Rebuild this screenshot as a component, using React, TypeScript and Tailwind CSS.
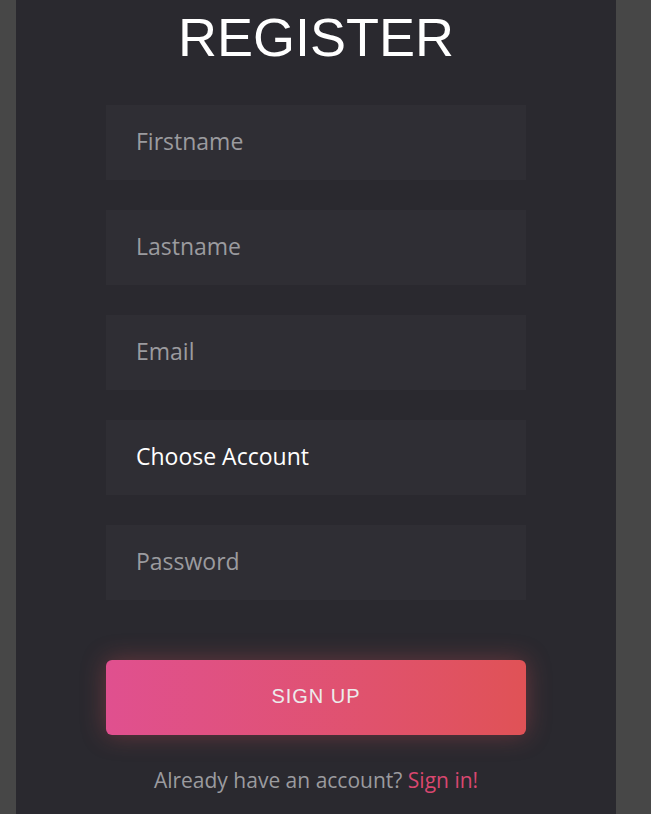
import React, { useState } from 'react';

const fields = [
  { name: 'firstname', placeholder: 'Firstname', type: 'text' },
  { name: 'lastname', placeholder: 'Lastname', type: 'text' },
  { name: 'email', placeholder: 'Email', type: 'email' },
];

const App: React.FC = () => {
  const [account, setAccount] = useState('');

  return (
    <div className="min-h-screen w-full bg-[#474747]">
      <div className="ml-[16px] w-[600px] min-h-[814px] bg-[#2a292f] px-[90px] pb-[20px]">
        <h1 className="pt-[6px] text-center text-[54px] leading-[62px] text-white font-['Liberation_Sans',Arial,sans-serif]">
          REGISTER
        </h1>

        <form
          className="mt-[37px] flex flex-col gap-[30px] font-['Open_Sans',sans-serif]"
          onSubmit={(e) => e.preventDefault()}
        >
          {fields.map((f) => (
            <input
              key={f.name}
              type={f.type}
              name={f.name}
              placeholder={f.placeholder}
              className="h-[75px] w-full bg-[#2f2e34] px-[30px] pb-[3px] text-[23px] text-white placeholder:text-[#9b9b9f] outline-none"
            />
          ))}

          <select
            value={account}
            onChange={(e) => setAccount(e.target.value)}
            className="h-[75px] w-full appearance-none bg-[#2f2e34] px-[30px] pb-[3px] text-[23px] text-white outline-none"
          >
            <option value="">Choose Account</option>
            <option value="personal">Personal</option>
            <option value="business">Business</option>
          </select>

          <input
            type="password"
            name="password"
            placeholder="Password"
            className="h-[75px] w-full bg-[#2f2e34] px-[30px] pb-[3px] text-[23px] text-white placeholder:text-[#9b9b9f] outline-none"
          />

          <button
            type="submit"
            className="mt-[30px] h-[75px] w-full rounded-[6px] bg-gradient-to-r from-[#e0508f] to-[#e05256] pb-[3px] text-[20px] tracking-[1px] text-[#ececec] shadow-[0_0_24px_rgba(224,80,90,0.35)] font-['Liberation_Sans',Arial,sans-serif]"
          >
            SIGN UP
          </button>
        </form>

        <p className="mt-[30px] text-center text-[21px] text-[#9b9b9f] font-['Open_Sans',sans-serif]">
          Already have an account?{' '}
          <a href="#" className="text-[#d9476f]">
            Sign in!
          </a>
        </p>
      </div>
    </div>
  );
};

export default App;
